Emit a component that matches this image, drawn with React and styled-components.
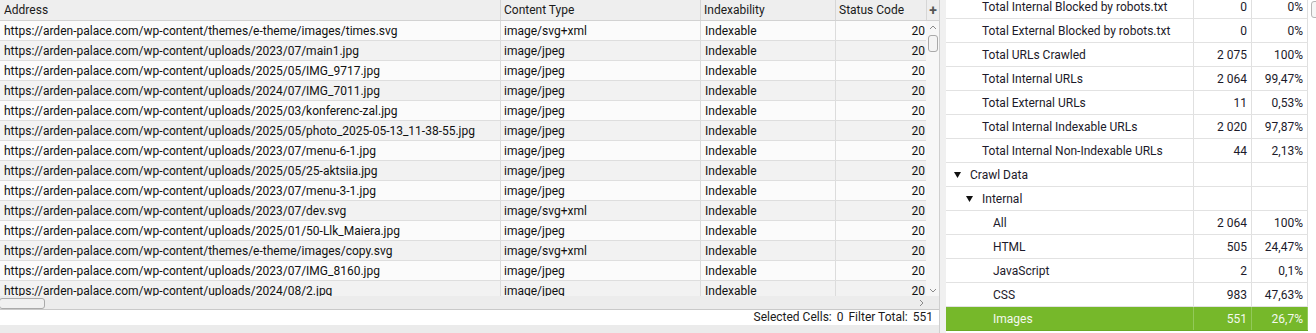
import styled, { createGlobalStyle } from 'styled-components'

const GlobalStyle = createGlobalStyle`
  html, body {
    margin: 0;
    padding: 0;
    background: #ffffff;
  }
  body {
    font-family: Roboto, "Liberation Sans", sans-serif;
    font-size: 12px;
    color: #111;
  }
`

const cols = [501, 200, 135, 91]

const urls = [
  ["https://arden-palace.com/wp-content/themes/e-theme/images/times.svg", "image/svg+xml"],
  ["https://arden-palace.com/wp-content/uploads/2023/07/main1.jpg", "image/jpeg"],
  ["https://arden-palace.com/wp-content/uploads/2025/05/IMG_9717.jpg", "image/jpeg"],
  ["https://arden-palace.com/wp-content/uploads/2024/07/IMG_7011.jpg", "image/jpeg"],
  ["https://arden-palace.com/wp-content/uploads/2025/03/konferenc-zal.jpg", "image/jpeg"],
  ["https://arden-palace.com/wp-content/uploads/2025/05/photo_2025-05-13_11-38-55.jpg", "image/jpeg"],
  ["https://arden-palace.com/wp-content/uploads/2023/07/menu-6-1.jpg", "image/jpeg"],
  ["https://arden-palace.com/wp-content/uploads/2025/05/25-aktsiia.jpg", "image/jpeg"],
  ["https://arden-palace.com/wp-content/uploads/2023/07/menu-3-1.jpg", "image/jpeg"],
  ["https://arden-palace.com/wp-content/uploads/2023/07/dev.svg", "image/svg+xml"],
  ["https://arden-palace.com/wp-content/uploads/2025/01/50-Llk_Maiera.jpg", "image/jpeg"],
  ["https://arden-palace.com/wp-content/themes/e-theme/images/copy.svg", "image/svg+xml"],
  ["https://arden-palace.com/wp-content/uploads/2023/07/IMG_8160.jpg", "image/jpeg"],
  ["https://arden-palace.com/wp-content/uploads/2024/08/2.jpg", "image/jpeg"],
]

const summary = [
  { label: "Total Internal Blocked by robots.txt", indent: 36, n: "0", p: "0%" },
  { label: "Total External Blocked by robots.txt", indent: 36, n: "0", p: "0%" },
  { label: "Total URLs Crawled", indent: 36, n: "2 075", p: "100%" },
  { label: "Total Internal URLs", indent: 36, n: "2 064", p: "99,47%" },
  { label: "Total External URLs", indent: 36, n: "11", p: "0,53%" },
  { label: "Total Internal Indexable URLs", indent: 36, n: "2 020", p: "97,87%" },
  { label: "Total Internal Non-Indexable URLs", indent: 36, n: "44", p: "2,13%" },
  { label: "Crawl Data", indent: 8, open: true, n: "", p: "" },
  { label: "Internal", indent: 20, open: true, n: "", p: "" },
  { label: "All", indent: 47, n: "2 064", p: "100%" },
  { label: "HTML", indent: 47, n: "505", p: "24,47%" },
  { label: "JavaScript", indent: 47, n: "2", p: "0,1%" },
  { label: "CSS", indent: 47, n: "983", p: "47,63%" },
  { label: "Images", indent: 47, n: "551", p: "26,7%", selected: true },
]

const Page = styled.div`
  display: flex;
  width: 1316px;
  height: 333px;
  overflow: hidden;
`

const LeftPanel = styled.div`
  width: 940px;
  flex-shrink: 0;
  display: flex;
  flex-direction: column;
  border-right: 1px solid #cfcfcf;
  box-sizing: border-box;
`

const HeaderRow = styled.div`
  display: flex;
  height: 21px;
  background: #eeeeee;
  border-bottom: 1px solid #d2d2d2;
  box-sizing: border-box;
`

const HeadCell = styled.div`
  width: ${p => p.$w}px;
  flex-shrink: 0;
  box-sizing: border-box;
  border-right: 1px solid #d6d6d6;
  padding-left: ${p => p.$pad}px;
  line-height: 21px;
  white-space: nowrap;
  overflow: hidden;
  color: #1a1a1a;
`

const PlusCell = styled.div`
  flex: 1;
  display: flex;
  align-items: center;
  justify-content: center;
  font-size: 14px;
  font-weight: 700;
  color: #555;
  line-height: 20px;
`

const Body = styled.div`
  display: flex;
  height: 275px;
`

const Rows = styled.div`
  width: 926px;
  overflow: hidden;
`

const Row = styled.div`
  display: flex;
  height: 20px;
  box-sizing: border-box;
  border-bottom: 1px solid #dedede;
  background: ${p => (p.$odd ? '#fbfbfb' : '#f2f2f2')};
`

const Cell = styled.div`
  width: ${p => p.$w}px;
  flex-shrink: 0;
  box-sizing: border-box;
  border-right: 1px solid #dcdcdc;
  padding: 0 ${p => (p.$right ? 1 : 0)}px 0 ${p => p.$pad}px;
  text-align: ${p => (p.$right ? 'right' : 'left')};
  line-height: 21px;
  white-space: nowrap;
  overflow: hidden;
`

const VScroll = styled.div`
  flex: 1;
  background: #f7f7f7;
  display: flex;
  flex-direction: column;
  align-items: center;
  padding: 3px 0 1px;
  box-sizing: border-box;
`

const VThumb = styled.div`
  width: 8px;
  height: 15px;
  margin-top: 3px;
  border: 1px solid #a9a9a9;
  border-radius: 3px;
  background: #f4f4f4;
`

const Spacer = styled.div`
  flex: 1;
`

const HScrollRow = styled.div`
  display: flex;
  height: 13px;
  background: #ececec;
  border-bottom: 1px solid #c9c9c9;
  box-sizing: content-box;
`

const HTrack = styled.div`
  width: 926px;
  display: flex;
  align-items: center;
  padding-top: 1px;
  box-sizing: border-box;
`

const HThumb = styled.div`
  width: 44px;
  height: 9px;
  margin-left: -1px;
  border: 1px solid #aaaaaa;
  border-radius: 3px;
  background: #f0f0f0;
`

const StatusBar = styled.div`
  height: 15px;
  display: flex;
  justify-content: flex-end;
  align-items: center;
  gap: 5px;
  padding-right: 6px;
  background: #ffffff;
  line-height: 15px;
  color: #1a1a1a;
`

const BottomBand = styled.div`
  flex: 1;
  background: #ebebeb;
`

const Splitter = styled.div`
  width: 6px;
  flex-shrink: 0;
  background: #f0f0f0;
`

const RightPanel = styled.div`
  flex: 1;
  display: flex;
  overflow: hidden;
  background: #ffffff;
`

const SummaryTable = styled.div`
  width: 362px;
  flex-shrink: 0;
  overflow: hidden;
`

/* the summary tree is scrolled a few pixels down */
const SummaryInner = styled.div`
  margin-top: -5px;
`

const SumRow = styled.div`
  display: flex;
  height: 24px;
  box-sizing: border-box;
  border-bottom: 1px solid ${p => (p.$selected ? '#6aa924' : '#e2e2e2')};
  background: ${p => (p.$selected ? '#76b82a' : '#ffffff')};
  color: ${p => (p.$selected ? '#f4f8ee' : '#1c1a2a')};
`

const Label = styled.div`
  width: 248px;
  flex-shrink: 0;
  box-sizing: border-box;
  border-right: 1px solid ${p => (p.$selected ? '#93c95a' : '#e0e0e0')};
  padding-left: ${p => p.$indent}px;
  padding-top: 1px;
  display: flex;
  align-items: center;
  gap: 9px;
  white-space: nowrap;
  overflow: hidden;
`

const NumCell = styled.div`
  width: ${p => p.$w}px;
  flex-shrink: 0;
  box-sizing: border-box;
  border-right: 1px solid ${p => (p.$selected ? '#93c95a' : '#e0e0e0')};
  padding-right: 4px;
  text-align: right;
  line-height: 25px;
  white-space: nowrap;
`

const RightScroll = styled.div`
  flex: 1;
  padding: 1px 0 0 3px;
`

const RThumb = styled.div`
  width: 12px;
  height: 15px;
  border: 1px solid #b5b5b5;
  border-radius: 3px;
  background: #f6f6f6;
`

const Chevron = ({ dir }) => {
  const pts = {
    up: "1,5 4,2 7,5",
    down: "1,2 4,5 7,2",
    right: "2,1 5,4 2,7",
  }[dir]
  return (
    <svg width="8" height="8" viewBox="0 0 8 8">
      <polyline points={pts} fill="none" stroke="#8a8a8a" strokeWidth="1" />
    </svg>
  )
}

const Triangle = () => (
  <svg width="7" height="6" viewBox="0 0 7 6">
    <polygon points="0,0 7,0 3.5,6" fill="#111" />
  </svg>
)

const headers = ["Address", "Content Type", "Indexability", "Status Code"]

export default function App() {
  return (
    <>
      <GlobalStyle />
      <Page>
        <LeftPanel>
          <HeaderRow>
            {headers.map((h, i) => (
              <HeadCell key={h} $w={cols[i]} $pad={i === 0 ? 4 : 3}>{h}</HeadCell>
            ))}
            <PlusCell>+</PlusCell>
          </HeaderRow>
          <Body>
            <Rows>
              {urls.map(([u, t], i) => (
                <Row key={u} $odd={i % 2 === 0}>
                  <Cell $w={cols[0]} $pad={4}>{u}</Cell>
                  <Cell $w={cols[1]} $pad={3}>{t}</Cell>
                  <Cell $w={cols[2]} $pad={4}>Indexable</Cell>
                  <Cell $w={cols[3]} $pad={0} $right>20</Cell>
                </Row>
              ))}
            </Rows>
            <VScroll>
              <Chevron dir="up" />
              <VThumb />
              <Spacer />
              <Chevron dir="down" />
            </VScroll>
          </Body>
          <HScrollRow>
            <HTrack>
              <HThumb />
              <Spacer />
              <Chevron dir="right" />
            </HTrack>
          </HScrollRow>
          <StatusBar>
            <span>Selected Cells:</span>
            <span>0</span>
            <span>Filter Total:</span>
            <span>551</span>
          </StatusBar>
          <BottomBand />
        </LeftPanel>
        <Splitter />
        <RightPanel>
          <SummaryTable>
            <SummaryInner>
              {summary.map(r => (
                <SumRow key={r.label} $selected={r.selected}>
                  <Label $indent={r.indent} $selected={r.selected}>
                    {r.open && <Triangle />}
                    <span>{r.label}</span>
                  </Label>
                  <NumCell $w={58} $selected={r.selected}>{r.n}</NumCell>
                  <NumCell $w={56} $selected={r.selected}>{r.p}</NumCell>
                </SumRow>
              ))}
            </SummaryInner>
          </SummaryTable>
          <RightScroll>
            <RThumb />
          </RightScroll>
        </RightPanel>
      </Page>
    </>
  )
}
